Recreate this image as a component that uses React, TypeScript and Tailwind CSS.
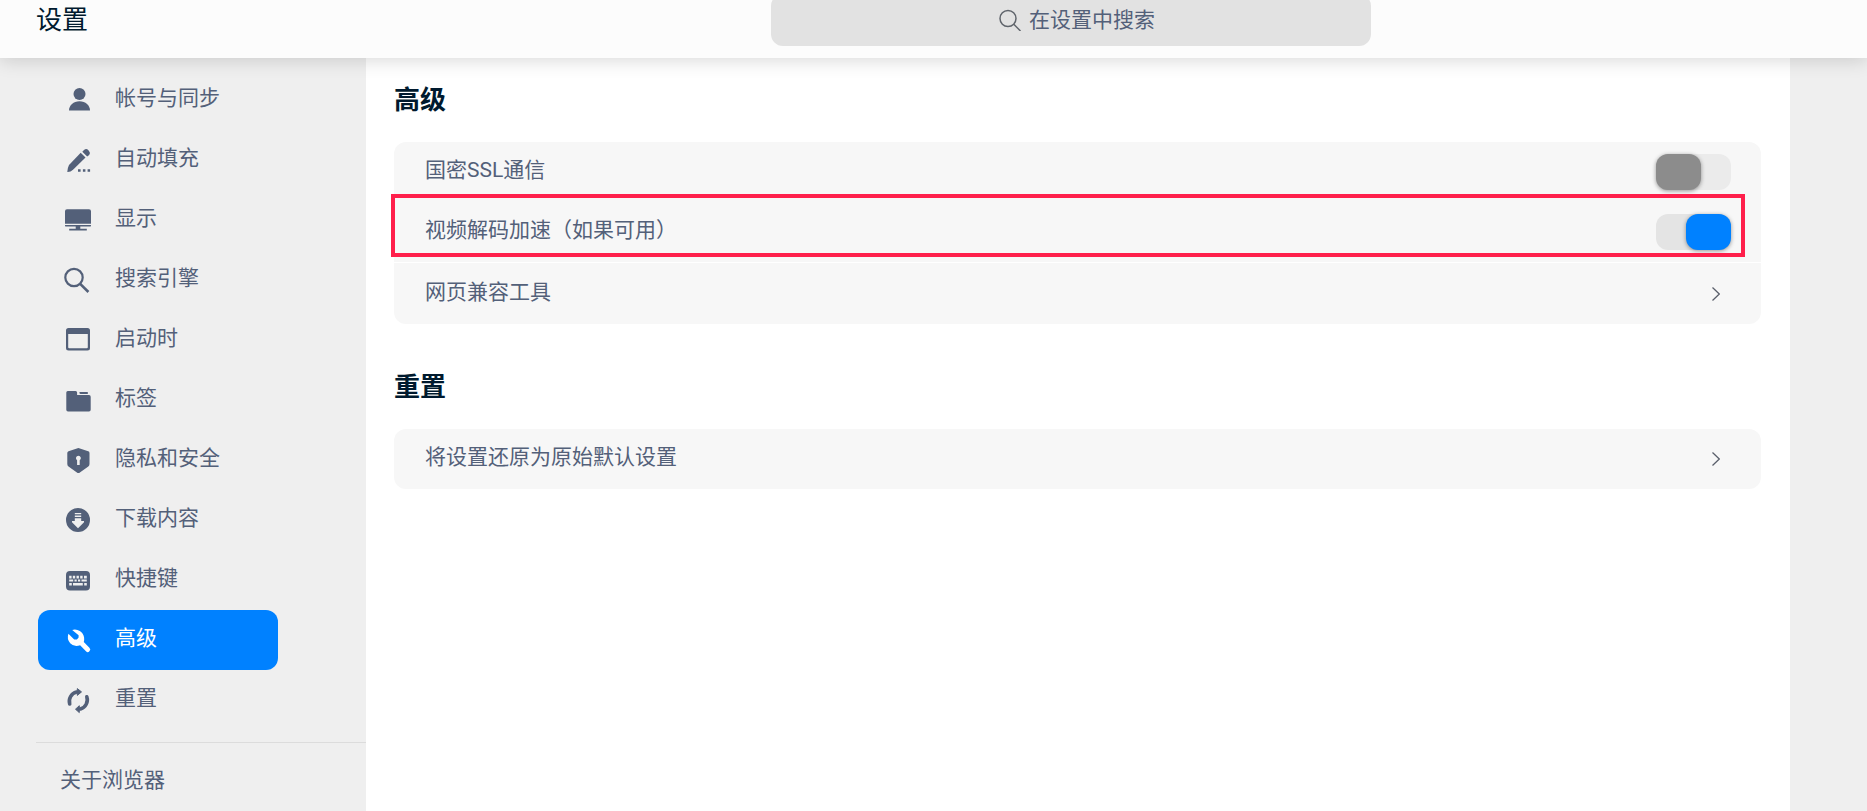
import { useState } from 'react';
import type { ReactNode } from 'react';
import clsx from 'clsx';

interface NavItem {
  id: string;
  label: string;
  icon: ReactNode;
}

const NAV_ITEMS: NavItem[] = [
  {
    id: 'account',
    label: '帐号与同步',
    icon: (
      <>
        <circle cx="13.5" cy="6" r="6" />
        <path d="M3 22.500c0-5 4.500-9.200 10.500-9.200s10.500 4.200 10.500 9.200z" />
      </>
    ),
  },
  {
    id: 'autofill',
    label: '自动填充',
    icon: (
      <>
        <path d="M14.700 4.800 19.500 9.500 7 21.800Q4.500 24.200 1.300 24 1.400 20 3 17z" />
        <path d="M16.300 3.700 18 2a3 3 0 0 1 4.400.3l.6.600a3 3 0 0 1 .2 4L21.200 8.400z" />
        <path d="M12 21.200h2.600v2.600H12zM16.900 21.200h2.500v2.600h-2.500zM21.600 21.200h2.500v2.600h-2.500z" />
      </>
    ),
  },
  {
    id: 'display',
    label: '显示',
    icon: (
      <>
        <path d="M1 1.200h22a2 2 0 0 1 2 2V15.700H-1V3.200a2 2 0 0 1 2-2z" />
        <path d="M-1 17h26v.4a1.200 1.200 0 0 1-1.200 1.200H14.300v2.200h6.500V22.600H3.200v-1.800h6.500v-2.200H.2A1.200 1.200 0 0 1-1 17.400z" />
      </>
    ),
  },
  {
    id: 'search',
    label: '搜索引擎',
    icon: (
      <g fill="none" stroke="currentColor" strokeWidth="2.200">
        <circle cx="8" cy="9.500" r="8.700" />
        <path d="m14.200 15.800 8.200 8.200" strokeWidth="2.600" />
      </g>
    ),
  },
  {
    id: 'startup',
    label: '启动时',
    icon: (
      <path
        fillRule="evenodd"
        d="M2.500 0h19A2.500 2.500 0 0 1 24 2.500v17.500a2.500 2.500 0 0 1-2.500 2.500h-19A2.500 2.500 0 0 1 0 20V2.500A2.500 2.500 0 0 1 2.500 0zM2.200 6v13.300a1 1 0 0 0 1 1h17.600a1 1 0 0 0 1-1V6z"
      />
    ),
  },
  {
    id: 'tabs',
    label: '标签',
    icon: (
      <>
        <path d="M1.800 3H9.600a1.500 1.500 0 0 1 1.500 1.500V7H23a1.700 1.700 0 0 1 1.700 1.700v13a1.700 1.700 0 0 1-1.700 1.700H2A1.700 1.700 0 0 1 .3 21.700V4.500A1.500 1.500 0 0 1 1.800 3z" />
        <path d="M13.500 4h8.300v2h-7.300a1 1 0 0 1-1-1z" />
      </>
    ),
  },
  {
    id: 'privacy',
    label: '隐私和安全',
    icon: (
      <path
        fillRule="evenodd"
        d="M12.400 0 22.200 3.300a1.800 1.800 0 0 1 1.300 1.700v11q0 1.500-1.200 2.600l-8.400 6q-1.500 1-3 0l-8.400-6Q1.300 17.500 1.300 16V5a1.800 1.800 0 0 1 1.200-1.700zM12.400 7.700a2.500 2.500 0 0 0-1.300 4.600V17h2.600v-4.700a2.500 2.500 0 0 0-1.300-4.600z"
      />
    ),
  },
  {
    id: 'downloads',
    label: '下载内容',
    icon: (
      <path
        fillRule="evenodd"
        d="M12 0a12 12 0 1 0 0 24 12 12 0 0 0 0-24zM8.800 5h6.400v1.300H8.800zM8.800 7.600h6.400v1.300H8.800zM8.800 10.200h6.400v2.800h2.800v1.200L12 20.200l-6-6V13h2.800z"
      />
    ),
  },
  {
    id: 'shortcuts',
    label: '快捷键',
    icon: (
      <path
        fillRule="evenodd"
        d="M4 3h16a4 4 0 0 1 4 4v11.500a4 4 0 0 1-4 4H4a4 4 0 0 1-4-4V7a4 4 0 0 1 4-4zM3.200 7.700v2.800h2.400V7.700zM6.800 7.700v2.800h2.400V7.700zM10.500 7.700v2.800h2.400V7.700zM14.200 7.700v2.800h2.400V7.700zM18 7.700v2.800h2.800V7.700zM3.200 11.500v2h4v-2zM8.500 11.500v2h2.200v-2zM12 11.500v2h2.200v-2zM15.500 11.500v2h5.300v-2zM3.200 15v2.600h2.600V15zM7 15v2.600h9.800V15zM18.200 15v2.600h2.600V15z"
      />
    ),
  },
  {
    id: 'advanced',
    label: '高级',
    icon: (
      <path d="M6.200 1.900A9.500 9.500 0 0 1 18.100 9.500q.3 2.500-.3 4.500l5.600 5.800a2.300 2.300 0 0 1 0 3.400 2.300 2.300 0 0 1-3.400 0l-5.900-6a9 9 0 0 1-9.900-2A9.500 9.500 0 0 1 2.400 5.800l5.800 5.600h2.700l1.700-1.800V7.300z" />
    ),
  },
  {
    id: 'reset',
    label: '重置',
    icon: (
      <>
        <g fill="none" stroke="currentColor" strokeWidth="3.600" strokeLinecap="round">
          <path d="M3.700 16A9.600 9.600 0 0 1 10.500 4" />
          <path d="M20.800 8.800A9.600 9.600 0 0 1 14.500 21" />
        </g>
        <path d="M11.300.6 15.500 3.900 11.300 7.400z" strokeLinejoin="round" stroke="currentColor" />
        <path d="M13.300 17.700 9.500 21.200l3.800 3.400z" strokeLinejoin="round" stroke="currentColor" />
      </>
    ),
  },
];

function Chevron() {
  return (
    <svg viewBox="0 0 8 14" className="mr-[11px] h-3.5 w-2" fill="none" stroke="#5a5f6b" strokeWidth="1.300" aria-hidden="true">
      <path d="M.5.500 7.300 7 .5 13.500" />
    </svg>
  );
}

function Toggle({ id, checked, onChange }: { id: string; checked: boolean; onChange: (v: boolean) => void }) {
  return (
    <input
      id={id}
      type="checkbox"
      checked={checked}
      onChange={(e) => onChange(e.target.checked)}
      className="flex h-9 w-[75px] shrink-0 cursor-pointer appearance-none rounded-xl bg-[#ebebeb] before:h-9 before:w-[45px] before:rounded-xl before:bg-[#8c8c8c] before:shadow-[0_1px_4px_rgba(0,0,0,0.4)] checked:justify-end checked:bg-[#e4e4e4] checked:before:bg-[#0081ff]"
    />
  );
}

export default function App() {
  const [active, setActive] = useState('advanced');
  const [ssl, setSsl] = useState(false);
  const [videoDecode, setVideoDecode] = useState(true);

  return (
    <div className="flex min-h-screen flex-col bg-[#efefef] font-[Roboto,'Noto_Sans_CJK_SC',sans-serif] text-[21px] leading-8 text-[#536079]">
      <header className="z-10 flex h-[58px] items-end bg-[#fcfcfc] pb-3 shadow-[0_2px_18px_rgba(0,0,0,0.16)]">
        <h1 className="flex h-[52px] w-[275px] shrink-0 items-center pl-9 text-[26px] text-[#001a2e]">设置</h1>
        <div className="flex flex-1 justify-center">
          <label className="flex h-[52px] w-full max-w-[600px] items-center justify-center gap-2 rounded-xl bg-[#e2e2e2] pl-4">
            <svg viewBox="0 0 22 22" className="size-[22px]" fill="none" stroke="#5f646b" strokeWidth="1.500" aria-hidden="true">
              <circle cx="9" cy="9.500" r="8" />
              <path d="m14.800 15.300 6.700 6.700" />
            </svg>
            <input
              type="text"
              aria-label="在设置中搜索"
              placeholder="在设置中搜索"
              className="w-[130px] bg-transparent outline-none placeholder:text-[#536079]"
            />
          </label>
        </div>
      </header>

      <div className="flex flex-1">
        <aside className="w-[366px] shrink-0 pt-3">
          <nav className="pl-[38px]">
            {NAV_ITEMS.map((item) => (
              <button
                key={item.id}
                onClick={() => setActive(item.id)}
                className={clsx(
                  'flex h-15 w-60 items-center gap-[25px] rounded-xl pl-7 text-left',
                  active === item.id && 'bg-[#0081ff] text-white',
                )}
              >
                <svg viewBox="0 0 24 24" className="size-6 overflow-visible" fill="currentColor" aria-hidden="true">
                  {item.icon}
                </svg>
                <span className="pb-1">{item.label}</span>
              </button>
            ))}
          </nav>
          <div className="mt-3 ml-9 border-t border-[#dcdcdc] pt-[21px] pl-6">
            <a href="#about">关于浏览器</a>
          </div>
        </aside>

        <main className="mr-[77px] flex-1 bg-white pt-[25px] pr-[29px] pl-7">
          <section>
            <h2 className="mb-6 text-[26px] leading-[35px] font-bold text-[#001a2e]">高级</h2>
            <div className="rounded-xl bg-[#f7f7f7]">
              <div className="flex h-15 items-center justify-between pr-[30px] pl-[31px]">
                <label htmlFor="ssl" className="pb-1">国密SSL通信</label>
                <Toggle id="ssl" checked={ssl} onChange={setSsl} />
              </div>
              <div className="relative flex h-15 items-center justify-between pr-[30px] pl-[31px]">
                <label htmlFor="video-decode" className="pb-1">视频解码加速（如果可用）</label>
                <Toggle id="video-decode" checked={videoDecode} onChange={setVideoDecode} />
                <div className="pointer-events-none absolute -top-2 right-4 bottom-[5px] -left-[3px] border-4 border-[#ff1f4b]" />
              </div>
              <button className="flex h-[62px] w-full items-center justify-between border-t border-white pr-[30px] pl-[31px]">
                <span className="pb-1">网页兼容工具</span>
                <Chevron />
              </button>
            </div>
          </section>

          <section className="mt-[46px]">
            <h2 className="mb-6 text-[26px] leading-[35px] font-bold text-[#001a2e]">重置</h2>
            <button className="flex h-15 w-full items-center justify-between rounded-xl bg-[#f7f7f7] pr-[30px] pl-[31px]">
              <span className="pb-1">将设置还原为原始默认设置</span>
              <Chevron />
            </button>
          </section>
        </main>
      </div>
    </div>
  );
}
